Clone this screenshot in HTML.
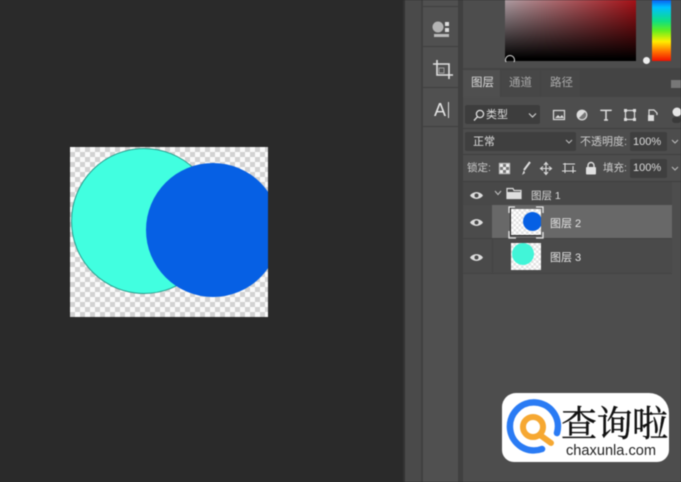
<!DOCTYPE html>
<html><head><meta charset="utf-8">
<style>
html,body{margin:0;padding:0;background:#2a2a2a}
body{width:681px;height:482px;overflow:hidden;position:relative;font-family:"Liberation Sans","Noto Sans CJK SC",sans-serif;color:#d4d4d4}
#w{position:absolute;left:0;top:0;width:681px;height:482px;filter:blur(.45px);overflow:hidden}
.a{position:absolute}
.t{position:absolute;white-space:nowrap;line-height:1}
.box{position:absolute;background:#404040;border-radius:2px}
.chk{background-color:#fafafa;background-image:conic-gradient(#d2d2d2 25%,#fafafa 0 50%,#d2d2d2 0 75%,#fafafa 0);}
.chk2{background-color:#fff;background-image:conic-gradient(#e2e2e2 25%,#fff 0 50%,#e2e2e2 0 75%,#fff 0);}
</style></head><body><div id="w">

<!-- canvas -->
<div class="a chk" style="left:70px;top:147px;width:198px;height:170px;background-size:10px 10px;overflow:hidden">
  <div class="a" style="left:1px;top:1px;width:144px;height:144px;border-radius:50%;background:#41ffe0;border:1px solid #2a9c8c"></div>
  <div class="a" style="left:76px;top:16px;width:134px;height:134px;border-radius:50%;background:#0660e4"></div>
</div>

<!-- panel columns -->
<div class="a" style="left:403px;top:0;width:2px;height:482px;background:#333"></div>
<div class="a" style="left:405px;top:0;width:16px;height:482px;background:#4a4a4a"></div>
<div class="a" style="left:421px;top:0;width:2px;height:482px;background:#404040"></div>
<div class="a" style="left:423px;top:0;width:35px;height:482px;background:#505050"></div>
<div class="a" style="left:458px;top:0;width:5px;height:482px;background:#404040"></div>
<div class="a" style="left:463px;top:0;width:218px;height:482px;background:#4d4d4d"></div>

<!-- tool column separators -->
<div class="a" style="left:423px;top:6px;width:35px;height:1px;background:#3f3f3f"></div>
<div class="a" style="left:423px;top:46px;width:35px;height:1px;background:#3f3f3f"></div>
<div class="a" style="left:423px;top:87px;width:35px;height:1px;background:#3f3f3f"></div>
<div class="a" style="left:423px;top:126px;width:35px;height:1px;background:#3f3f3f"></div>

<!-- tool icons -->
<svg class="a" style="left:423px;top:10px" width="35" height="105" viewBox="0 0 35 105" fill="none">
  <circle cx="15" cy="17" r="5.500" fill="#b4b4b4"/>
  <rect x="22" y="12" width="4" height="4" fill="#ddd"/>
  <rect x="22" y="18" width="4" height="4" fill="#ddd"/>
  <rect x="11" y="24" width="15" height="3" fill="#bbb"/>
  <path d="M14 50V65H30M10 54H26V69" stroke="#e0e0e0" stroke-width="1.6"/>
  <path d="M16 58h5v5h-5z" stroke="#999"/>
</svg>
<div class="t" style="left:434px;top:101px;font-size:18px;color:#e4e4e4">A</div>
<div class="a" style="left:448px;top:102px;width:1px;height:16px;background:#ddd"></div>

<!-- color picker -->
<div class="a" style="left:505px;top:0;width:131px;height:61px;background:linear-gradient(to bottom,rgba(0,0,0,.06) 0%,#000 96%),linear-gradient(to right,#b8a6ac,#b01218)"></div>
<div class="a" style="left:505px;top:55px;width:8px;height:8px;border-radius:50%;border:1px solid #ddd;clip-path:inset(0 0 3px 0)"></div>
<div class="a" style="left:652px;top:0;width:19px;height:61px;background:linear-gradient(to bottom,#0a60f0 0%,#00c0ff 12%,#10e080 35%,#60ee20 50%,#ffee00 68%,#ff7000 85%,#f01000 100%)"></div>
<div class="a" style="left:643px;top:57px;width:7px;height:7px;border-radius:50%;background:#eee"></div>

<!-- tabs -->
<div class="a" style="left:463px;top:68px;width:218px;height:29px;background:#444"></div>
<div class="a" style="left:463px;top:70px;width:37px;height:27px;background:#4f4f4f"></div>
<div class="a" style="left:501px;top:70px;width:39px;height:27px;background:#474747"></div>
<div class="a" style="left:541px;top:70px;width:39px;height:27px;background:#474747"></div>
<div class="t" style="left:471px;top:78px;font-size:11.5px;color:#ddd">图层</div>
<div class="t" style="left:509px;top:78px;font-size:11.5px;color:#aaa">通道</div>
<div class="t" style="left:550px;top:78px;font-size:11.5px;color:#aaa">路径</div>
<div class="a" style="left:671px;top:80px;width:10px;height:8px;background:#777"></div>

<!-- filter row -->
<div class="box" style="left:465px;top:105px;width:75px;height:19px;background:#3d3d3d"></div>
<svg class="a" style="left:472px;top:108px" width="14" height="14" fill="none" stroke="#ddd" stroke-width="1.3"><circle cx="8" cy="6" r="3.6"/><path d="M5.4 8.800L2 12.500"/></svg>
<div class="t" style="left:486px;top:110px;font-size:11px;color:#ddd">类型</div>
<svg class="a" style="left:528px;top:112px" width="9" height="7" fill="none" stroke="#ccc" stroke-width="1.2"><path d="M1 1.500l3.500 3.500L8 1.500"/></svg>
<svg class="a" style="left:550px;top:105px" width="131" height="20" fill="none" stroke="#ddd" stroke-width="1.2">
  <rect x="3.500" y="5.500" width="11" height="9"/><path d="M5 13l3-3 2 2 2-2 2 3" fill="#ddd" stroke="none"/>
  <circle cx="32" cy="10" r="4.800" fill="#777"/><path d="M28.600 13.400A4.800 4.800 0 0 1 35.400 6.600Z" fill="#ddd" stroke="none"/>
  <path d="M51 6V5.400H61V6M56 5.500V15M54 15H58" stroke-width="1.5"/>
  <rect x="75.500" y="5.500" width="9" height="9"/><path d="M74 4h3v3h-3zM83 4h3v3h-3zM74 13h3v3h-3zM83 13h3v3h-3z" fill="#ddd" stroke="none"/>
  <path d="M99 15V5h5l3 3v2" /><rect x="98" y="10" width="6" height="6" fill="#ddd" stroke="none"/>
  <circle cx="127" cy="7" r="4.500" fill="#e6e6e6" stroke="none"/><rect x="122" y="12" width="9" height="6" rx="3" fill="#3a3a3a" stroke="none"/>
</svg>

<!-- blend row -->
<div class="a" style="left:463px;top:128px;width:218px;height:1px;background:#3f3f3f"></div>
<div class="box" style="left:465px;top:132px;width:111px;height:19px;background:#3f3f3f"></div>
<div class="t" style="left:473px;top:137px;font-size:11px;color:#ddd">正常</div>
<svg class="a" style="left:565px;top:139px" width="8" height="6" fill="none" stroke="#bbb" stroke-width="1.1"><path d="M1 1l3 3 3-3"/></svg>
<div class="t" style="left:580px;top:137px;font-size:11px;color:#ccc">不透明度:</div>
<div class="box" style="left:630px;top:132px;width:37px;height:19px;background:#3f3f3f"></div>
<div class="t" style="left:633px;top:137px;font-size:11px;color:#ddd">100%</div>
<svg class="a" style="left:671px;top:139px" width="8" height="6" fill="none" stroke="#bbb" stroke-width="1.1"><path d="M1 1l3 3 3-3"/></svg>
<div class="a" style="left:463px;top:154px;width:218px;height:1px;background:#404040"></div>

<!-- lock row -->
<div class="t" style="left:467px;top:163px;font-size:10.500px;color:#ccc">锁定:</div>
<svg class="a" style="left:496px;top:158px" width="110" height="20" fill="none" stroke="#ddd" stroke-width="1.3">
  <rect x="3.500" y="5.500" width="10" height="10" fill="#777" stroke="#bbb"/>
  <path d="M4 6h3v3H4zM10 6h3v3h-3zM7 9h3v3H7zM4 12h3v3H4zM10 12h3v3h-3z" fill="#eee" stroke="none"/>
  <path d="M34 4L28 12" stroke-width="2"/><path d="M28 12l-2 5 3-2z" fill="#ddd" stroke="none"/>
  <path d="M50 5v11M44.500 10.500H55.500M48 7l2-2.500L52 7M48 14l2 2.500L52 14M47 8.500l-2.500 2 2.500 2M53 8.500l2.500 2-2.500 2" stroke-width="1.1"/>
  <path d="M67 6H79M69 5V15M77 8V15M66 13H80" stroke-width="1.1"/>
  <rect x="90" y="9" width="10" height="7.500" rx="1" fill="#e0e0e0" stroke="none"/><path d="M92 9V7.500a3 3 0 0 1 6 0V9" stroke-width="1.400"/>
</svg>
<div class="t" style="left:603px;top:163px;font-size:10.500px;color:#ccc">填充:</div>
<div class="box" style="left:630px;top:159px;width:37px;height:19px;background:#3f3f3f"></div>
<div class="t" style="left:633px;top:163px;font-size:11px;color:#ddd">100%</div>
<svg class="a" style="left:671px;top:166px" width="8" height="6" fill="none" stroke="#bbb" stroke-width="1.1"><path d="M1 1l3 3 3-3"/></svg>
<div class="a" style="left:463px;top:181px;width:218px;height:1px;background:#404040"></div>

<!-- layer list -->
<div class="a" style="left:463px;top:182px;width:209px;height:23px;background:#484848"></div>
<div class="a" style="left:492px;top:205px;width:180px;height:33px;background:#686868"></div>
<div class="a" style="left:463px;top:205px;width:29px;height:33px;background:#4b4b4b"></div>
<div class="a" style="left:463px;top:239px;width:209px;height:34px;background:#4a4a4a"></div>
<div class="a" style="left:463px;top:238px;width:209px;height:1px;background:#414141"></div>
<div class="a" style="left:463px;top:273px;width:209px;height:1px;background:#444"></div>
<div class="a" style="left:492px;top:239px;width:1px;height:34px;background:#444"></div>

<svg class="a" style="left:469px;top:188px" width="16" height="80" fill="none">
  <path d="M1 7.500C4 3 11 3 14 7.500C11 12 4 12 1 7.500Z" fill="#ddd"/><circle cx="7.500" cy="7.500" r="2" fill="#4a4a4a"/>
  <g transform="translate(0,27)"><path d="M1 7.500C4 3 11 3 14 7.500C11 12 4 12 1 7.500Z" fill="#ddd"/><circle cx="7.500" cy="7.500" r="2" fill="#4a4a4a"/></g>
  <g transform="translate(0,62)"><path d="M1 7.500C4 3 11 3 14 7.500C11 12 4 12 1 7.500Z" fill="#ddd"/><circle cx="7.500" cy="7.500" r="2" fill="#4a4a4a"/></g>
</svg>
<svg class="a" style="left:494px;top:190px" width="8" height="7" fill="none" stroke="#bbb" stroke-width="1.1"><path d="M1 1l3 3.500L7 1"/></svg>
<svg class="a" style="left:506px;top:187px" width="16" height="13"><path d="M1 1.500H7L8 3.500H15V11.500H1Z" fill="none" stroke="#ddd" stroke-width="1.2"/><rect x="1" y="5" width="14" height="7" fill="#ddd"/></svg>
<div class="t" style="left:531px;top:191px;font-size:10.500px;color:#ddd">图层 1</div>

<!-- thumb 2 -->
<div class="a chk2" style="left:511px;top:209px;width:30px;height:27px;background-size:5px 5px">
  <div class="a" style="left:12px;top:3px;width:19px;height:19px;border-radius:50%;background:#0660e4;clip-path:inset(0 1px 0 0)"></div>
</div>
<svg class="a" style="left:508px;top:206px" width="36" height="33" fill="none" stroke="#e6e6e6" stroke-width="1.300"><path d="M1 7V1H7M28 1H35V7M1 25V32H8M35 26V32H28" /></svg>
<div class="a" style="left:511px;top:235px;width:30px;height:1px;background:#222"></div>
<div class="a" style="left:510px;top:208px;width:1px;height:28px;background:#222"></div>
<div class="t" style="left:550px;top:219px;font-size:11px;color:#e4e4e4">图层 2</div>

<!-- thumb 3 -->
<div class="a chk2" style="left:511px;top:243px;width:30px;height:27px;background-size:5px 5px">
  <div class="a" style="left:1px;top:0;width:22px;height:22px;border-radius:50%;background:#41f5d8"></div>
</div>
<div class="t" style="left:550px;top:253px;font-size:11px;color:#e4e4e4">图层 3</div>

<!-- logo -->
<div class="a" style="left:502px;top:393px;width:167px;height:69px;background:#fff;border-radius:14px 20px 12px 12px"></div>
<svg class="a" style="left:505px;top:398px" width="60" height="60" fill="none">
  <path d="M52 35A24 24 0 1 0 37 51" stroke="#2a7bf4" stroke-width="6.500" stroke-linecap="round"/>
  <circle cx="28" cy="29" r="10" stroke="#f6a832" stroke-width="6"/>
  <path d="M35 37L46 45" stroke="#f6a832" stroke-width="6" stroke-linecap="round"/>
</svg>
<div class="t" style="left:561px;top:402px;font-size:36px;font-family:'Noto Serif CJK SC',serif;color:#111;letter-spacing:-.5px;line-height:40px;-webkit-text-stroke:.35px #111">查询啦</div>
<div class="t" style="left:566px;top:444px;font-size:14.600px;color:#222">chaxunla.com</div>

</div></body></html>
